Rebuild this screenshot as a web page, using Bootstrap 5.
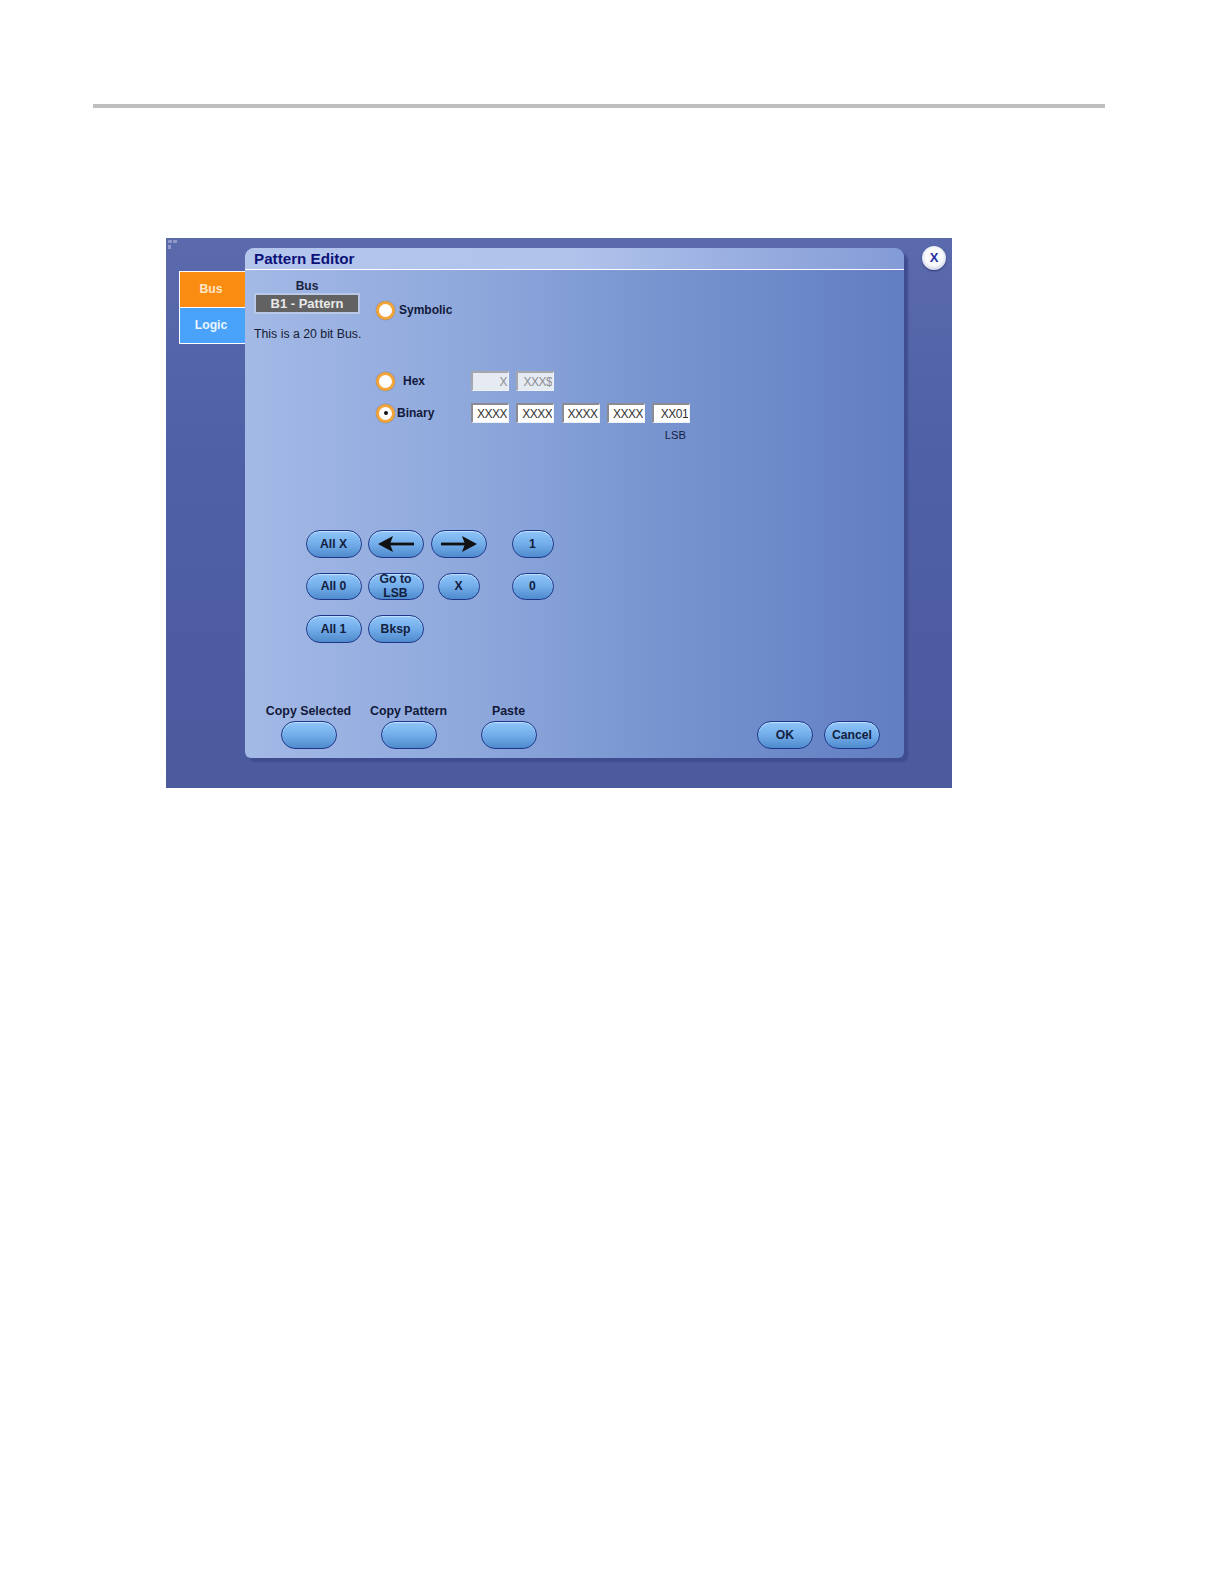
<!DOCTYPE html>
<html lang="en">
<head>
<meta charset="utf-8">
<title>Pattern Editor</title>
<link href="https://cdn.jsdelivr.net/npm/bootstrap@5.3.0/dist/css/bootstrap.min.css" rel="stylesheet">
<style>
body { background:#fff; font-family:"Liberation Sans",Arial,sans-serif; color:#111; }
.top-rule { height:4px; margin:104px 119px 0 93px; background:#bfbfbf; }
.scope-frame { position:relative; width:786px; height:550px; margin:130px 0 0 166px; background:linear-gradient(180deg,#5a6aac 0%,#5060a6 40%,#4c5a9e 100%); }
.grip { position:absolute; left:2px; top:2px; }
.side-tabs { width:66px; margin:33px 0 0 13px; border:solid #fff; border-width:1px 0 1px 1px; }
.side-tab { display:flex; align-items:center; justify-content:center; height:36px; font-size:12.2px; font-weight:700; padding-right:3px; }
.side-tab-on { background:#fb8c12; color:#fde7c8; border-bottom:1px solid #fff; }
.side-tab-off { background:#4aa3fb; color:#eaf5ff; height:35px; }
.editor { width:659px; height:510px; flex:none; margin-top:10px; border-radius:9px 9px 6px 6px; background:linear-gradient(90deg,#a3b9e6 0%,#8ea8dc 35%,#7693cf 65%,#627ec2 100%); box-shadow:4px 4px 2px #3f4d90; }
.editor-title { height:22px; padding-left:9px; border-bottom:1px solid #fff; border-radius:9px 9px 0 0; background:linear-gradient(90deg,#b4c6ec 0%,#b0c3eb 50%,#839bd6 100%); font-size:15.2px; line-height:22px; font-weight:700; color:#0c1278; }
.bus-col { width:106px; margin-left:9px; font-size:12.3px; }
.bus-name { margin-top:9px; height:14px; line-height:14px; font-size:12px; text-align:center; font-weight:700; color:#1a2340; }
.bus-box { height:21px; line-height:17px; text-align:center; font-size:13px; font-weight:700; color:#e9e9e9; background:#626262; border:2px solid #b9c8e6; }
.bus-note { margin-top:13px; height:14px; line-height:14px; white-space:nowrap; color:#151c33; }
.mode-col { margin-left:16px; }
.mode-row { display:flex; align-items:center; height:20px; }
.mode-sym { margin-top:30px; }
.mode-hex { margin-top:51px; }
.mode-bin { margin-top:12px; }
.radio-dot { display:flex; align-items:center; justify-content:center; flex:none; width:19px; height:19px; border-radius:50%; background:#fff; border:3.5px solid #f2a63a; box-shadow:0 0 1px #5c607e; }
.radio-dot i { width:4px; height:4px; border-radius:50%; background:#111; }
.mode-label { width:76px; font-size:12px; font-weight:700; color:#12193a; padding-left:4px; }
.mode-label-in { padding-left:8px; }
.mode-label-bin { padding-left:2px; }
.bits { display:flex; gap:7.3px; }
.bit-cell { width:38px; height:20px; padding:0 1px 0 0; border:solid; border-width:2px 1px 1px 2px; border-color:#8a8c92 #eef1f8 #eef1f8 #8a8c92; border-radius:0; background:#fff; color:#333; font:12px/16px "Liberation Sans",Arial,sans-serif; letter-spacing:-.5px; text-align:right; box-shadow:none; }
.bit-cell:disabled { background:#e6eaf2; color:#8b8e95; border-color:#a4a7ae #eef1f8 #eef1f8 #a4a7ae; }
.lsb { margin-top:5px; height:14px; line-height:14px; width:310px; text-align:right; font-size:11.2px; color:#15203f; }
.keypad { display:grid; grid-template-columns:56px 56px 57px 61px; grid-auto-rows:27.5px; row-gap:15px; column-gap:6px; margin:88px 0 0 60.5px; }
.pill, .pill:hover { display:flex; align-items:center; justify-content:center; width:56px; height:27.5px; padding:0; border:1.5px solid #1d3688; border-radius:14px; background:linear-gradient(180deg,#8ec5f8 0%,#76b0ec 45%,#4f8acd 100%); box-shadow:inset 0 1px 1px #c6e2fd; font-size:12.2px; line-height:14px; font-weight:700; color:#13203f; }
.pill-short { width:42px; justify-self:end; }
.pill-end { justify-self:end; }
.pill-x { margin-right:7px; }
.pill-wrap { overflow:hidden; }
.copy-bar { display:flex; align-items:flex-end; margin-top:60.5px; padding:0 24px 0 13.5px; }
.copy-item { display:flex; flex-direction:column; align-items:center; width:100px; }
.copy-label { height:18px; font-size:12.4px; line-height:16px; font-weight:700; white-space:nowrap; color:#12193a; }
.pill-cancel { margin-left:11px; }
.close-x, .close-x:hover { position:absolute; left:756px; top:8px; display:flex; align-items:center; justify-content:center; width:24px; height:24px; padding:0 0 1px; border:none; border-radius:50%; background:radial-gradient(circle at 50% 45%,#fafbfe 48%,#a9b0ce 100%); box-shadow:0 1px 2px #2f3a78; font-size:13px; font-weight:700; color:#24349e; }
</style>
</head>
<body>
<div class="top-rule"></div>
<div class="scope-frame d-flex">
  <svg class="grip" width="12" height="12" viewBox="0 0 12 12"><rect x="0" y="0" width="4" height="3" fill="#8f98c6"/><rect x="5" y="0" width="4" height="3" fill="#8f98c6"/><rect x="0" y="5" width="3" height="4" fill="#8f98c6"/></svg>
  <div class="side-tabs align-self-start">
    <div class="side-tab side-tab-on">Bus</div>
    <div class="side-tab side-tab-off">Logic</div>
  </div>
  <div class="editor d-flex flex-column">
    <div class="editor-title">Pattern Editor</div>
    <div class="d-flex">
      <div class="bus-col">
        <div class="bus-name">Bus</div>
        <div class="bus-box">B1 - Pattern</div>
        <div class="bus-note">This is a 20 bit Bus.</div>
      </div>
      <div class="mode-col">
        <div class="mode-row mode-sym"><span class="radio-dot"></span><span class="mode-label">Symbolic</span></div>
        <div class="mode-row mode-hex"><span class="radio-dot"></span><span class="mode-label mode-label-in">Hex</span>
          <div class="bits"><input class="bit-cell form-control" value="X" disabled><input class="bit-cell form-control" value="XXX$" disabled></div></div>
        <div class="mode-row mode-bin"><span class="radio-dot"><i></i></span><span class="mode-label mode-label-bin">Binary</span>
          <div class="bits"><input class="bit-cell form-control" value="XXXX"><input class="bit-cell form-control" value="XXXX"><input class="bit-cell form-control" value="XXXX"><input class="bit-cell form-control" value="XXXX"><input class="bit-cell form-control" value="XX01"></div></div>
        <div class="lsb">LSB</div>
      </div>
    </div>
    <div class="keypad">
      <button class="btn pill">All X</button>
      <button class="btn pill"><svg width="36" height="18" viewBox="0 0 36 18"><path d="M36 9H9" stroke="#111" stroke-width="2.8" fill="none"/><path d="M0 9 15 1 12 9 15 17Z" fill="#111"/></svg></button>
      <button class="btn pill pill-end"><svg width="36" height="18" viewBox="0 0 36 18"><path d="M0 9H27" stroke="#111" stroke-width="2.8" fill="none"/><path d="M36 9 21 1 24 9 21 17Z" fill="#111"/></svg></button>
      <button class="btn pill pill-short">1</button>
      <button class="btn pill">All 0</button>
      <button class="btn pill pill-wrap">Go to<br>LSB</button>
      <button class="btn pill pill-short pill-end pill-x">X</button>
      <button class="btn pill pill-short">0</button>
      <button class="btn pill">All 1</button>
      <button class="btn pill">Bksp</button>
    </div>
    <div class="copy-bar">
      <div class="copy-item"><span class="copy-label">Copy Selected</span><button class="btn pill" aria-label="Copy Selected"></button></div>
      <div class="copy-item"><span class="copy-label">Copy Pattern</span><button class="btn pill" aria-label="Copy Pattern"></button></div>
      <div class="copy-item"><span class="copy-label">Paste</span><button class="btn pill" aria-label="Paste"></button></div>
      <button class="btn pill ms-auto">OK</button>
      <button class="btn pill pill-cancel">Cancel</button>
    </div>
  </div>
  <button class="btn close-x">X</button>
</div>
<script src="https://cdn.jsdelivr.net/npm/bootstrap@5.3.0/dist/js/bootstrap.bundle.min.js"></script>
</body>
</html>
